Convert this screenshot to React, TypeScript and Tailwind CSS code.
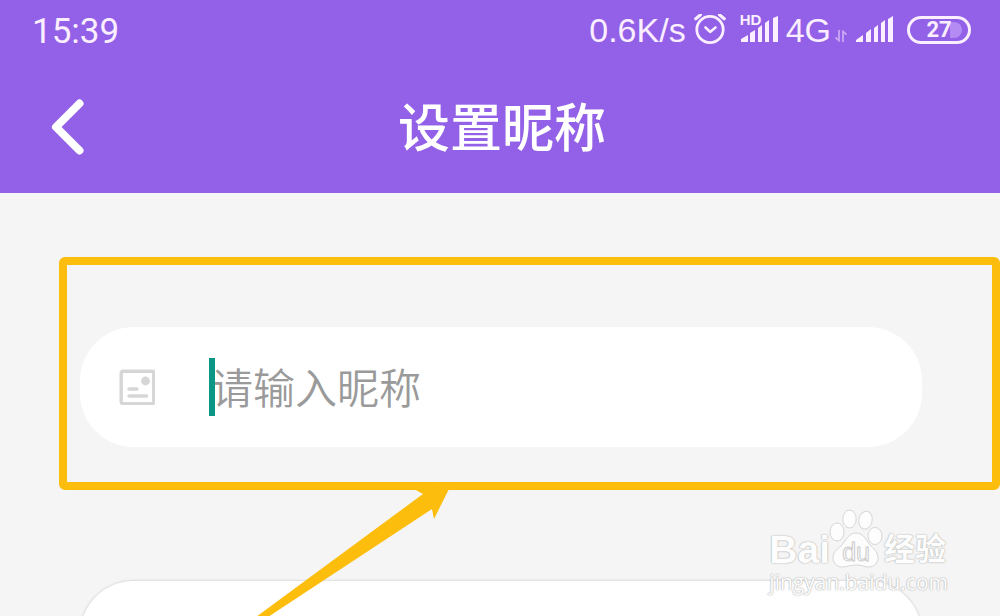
import React from 'react';

function AlarmIcon() {
  return (
    <svg className="h-8 w-8" viewBox="0 0 32 32" fill="none" stroke="currentColor" strokeLinecap="round" strokeLinejoin="round">
      <circle cx="16" cy="15.500" r="13.200" strokeWidth="2.8" />
      <path d="M11.500 13.500l4.600 4.400 5.400-4.400" strokeWidth="2.6" />
      <path d="M1.800 4.700L6.500 0.800M25.500 0.800l4.700 3.900" strokeWidth="3.200" />
    </svg>
  );
}

function SignalBars() {
  return (
    <svg className="h-7 w-10" viewBox="0 0 40 28" fill="currentColor">
      <path d="M1 26v-2l7-5v7zM11 26V17l5-4v13zM19 26V12l4-3v17zM26 26V7l4-3v22zM33 26V3l5-3v26z" />
    </svg>
  );
}

function StatusBar() {
  return (
    <div className="flex h-15 items-center justify-between pr-[29px] pl-8 text-[34px] leading-none text-[#fbeeff]">
      <time className="pt-0.5 font-[Roboto,sans-serif] text-[35px]">15:39</time>
      <div className="flex items-center">
        <span className="mr-2">0.6K/s</span>
        <AlarmIcon />
        <span className="relative ml-3 flex w-10">
          <span className="absolute -top-1 left-0.5 text-[15px] leading-none font-bold">HD</span>
          <svg className="h-7 w-10" viewBox="0 0 40 28" fill="currentColor">
            <path d="M3 26v-3l7-4v7zM12 26v-9l5-3v12zM20 26V12l4-3v17zM27 26V7l4-3v22zM35 26V2l5-2v26z" />
          </svg>
        </span>
        <span className="ml-2">4G</span>
        <svg className="mt-3 ml-1 h-3 w-3" viewBox="0 0 12 12" fill="none" stroke="#c9a8f4" strokeWidth="1.8">
          <path d="M4 0v10.500L0.500 7.500M8 12V1.500L11.500 4.500" />
        </svg>
        <span className="ml-2 flex">
          <SignalBars />
        </span>
        <span className="relative ml-3 flex h-7 w-16 items-center justify-center rounded-full border-3 border-current font-[Roboto,sans-serif] text-[22px] leading-none font-bold">
          <span className="absolute right-1.5 h-4 w-3 rounded-r-full bg-[#b48bf3]" />
          <span className="relative">27</span>
        </span>
      </div>
    </div>
  );
}

function TitleBar() {
  return (
    <div className="grid h-[133px] grid-cols-[1fr_auto_1fr] items-center">
      <button type="button" aria-label="返回" className="ml-12 flex h-16 w-10 items-center justify-center text-white">
        <svg className="h-16 w-10" viewBox="0 0 40 64" fill="none" stroke="currentColor" strokeWidth="8" strokeLinecap="round" strokeLinejoin="round">
          <path d="M31.500 8.500L8 32 31.500 55.500" />
        </svg>
      </button>
      <h1 className="pt-1 pl-1 text-[52px] leading-none font-medium text-white">设置昵称</h1>
    </div>
  );
}

function CardIcon() {
  return (
    <svg className="h-9 w-9" viewBox="0 0 36 36" fill="none" stroke="#d6d6d6">
      <rect x="2.200" y="2.200" width="32.600" height="32.600" rx="2" strokeWidth="3.400" />
      <circle cx="26.500" cy="12" r="4.400" fill="#d6d6d6" stroke="none" />
      <path d="M10 20h8M10 27h17.500" strokeWidth="3.400" strokeLinecap="round" />
    </svg>
  );
}

function Watermark() {
  return (
    <div className="absolute right-[52px] bottom-5 text-[#fdfdfd] [text-shadow:0_0_1px_#aaa,0_0_2px_#bbb]">
      <div className="flex h-[60px] items-end">
        <span className="text-[39px] leading-9 font-bold">Bai</span>
        <span className="relative flex h-[60px] w-13 shrink-0 items-end justify-center">
          <svg className="absolute inset-y-0 -left-0.5 h-[60px] w-14" viewBox="0 0 56 60" fill="#fdfdfd" stroke="#d6d6d6">
            <ellipse cx="9" cy="24" rx="7" ry="9" />
            <ellipse cx="21.500" cy="11" rx="6.700" ry="9" />
            <ellipse cx="37.500" cy="12" rx="6.700" ry="9" transform="rotate(12 37 12)" />
            <ellipse cx="47" cy="28" rx="7" ry="8.500" />
            <path d="M28 25c-8 0-10 8-15 13-5 4-8 7-8 12 0 5 4 9 9 9 5 0 8-2 14-2s8 2 13 2c5 0 9-4 9-9 0-5-3-8-7-12-5-5-7-13-15-13z" />
          </svg>
          <span className="relative pb-1.5 text-[25px] leading-5 [-webkit-text-stroke:1px_#cccccc] [text-shadow:none]">du</span>
        </span>
        <span className="ml-0.5 text-[31px] leading-9 font-bold whitespace-nowrap">经验</span>
      </div>
      <div className="font-['Open_Sans',sans-serif] text-[21px] leading-7">jingyan.baidu.com</div>
    </div>
  );
}

export default function App() {
  return (
    <div className="relative flex h-screen flex-col overflow-hidden bg-[#f5f5f5] font-['Liberation_Sans','Noto_Sans_CJK_SC',sans-serif]">
      <header className="shrink-0 bg-[#9261e7]">
        <StatusBar />
        <TitleBar />
      </header>

      <main className="flex flex-col gap-[134px] pt-[134px] pr-[78px] pl-20">
        <div className="relative">
          <div className="flex h-[120px] items-center rounded-[54px] bg-white pr-10 pl-[39px]">
            <label htmlFor="nickname" aria-label="昵称">
              <CardIcon />
            </label>
            <div className="relative ml-[54px] flex flex-1 items-center">
              <input
                id="nickname"
                type="text"
                placeholder="请输入昵称"
                className="h-16 w-full bg-transparent pt-1.5 pl-0.5 text-[42px] font-[350] text-[#333] outline-none placeholder:text-[#9a9a9a]"
              />
              <span className="absolute left-0 h-[58px] w-1.5 bg-[#0b9685]" />
            </div>
          </div>
          <div className="pointer-events-none absolute -top-[70px] -right-[78px] -bottom-[43px] -left-[21px] rounded-md border-8 border-[#fcbd0c]" />
          <svg className="pointer-events-none absolute top-40 left-[176px] z-10 h-[130px] w-[200px]" viewBox="0 0 200 130" fill="#fcbd0c">
            <path d="M0 130L167 7L158 2L194 0L178 32L176 22L12 130z" />
          </svg>
        </div>
        <div className="h-[120px] rounded-[54px] bg-white shadow-[0_0_2px_1px_#dcdcdc]" />
      </main>

      <Watermark />
    </div>
  );
}
